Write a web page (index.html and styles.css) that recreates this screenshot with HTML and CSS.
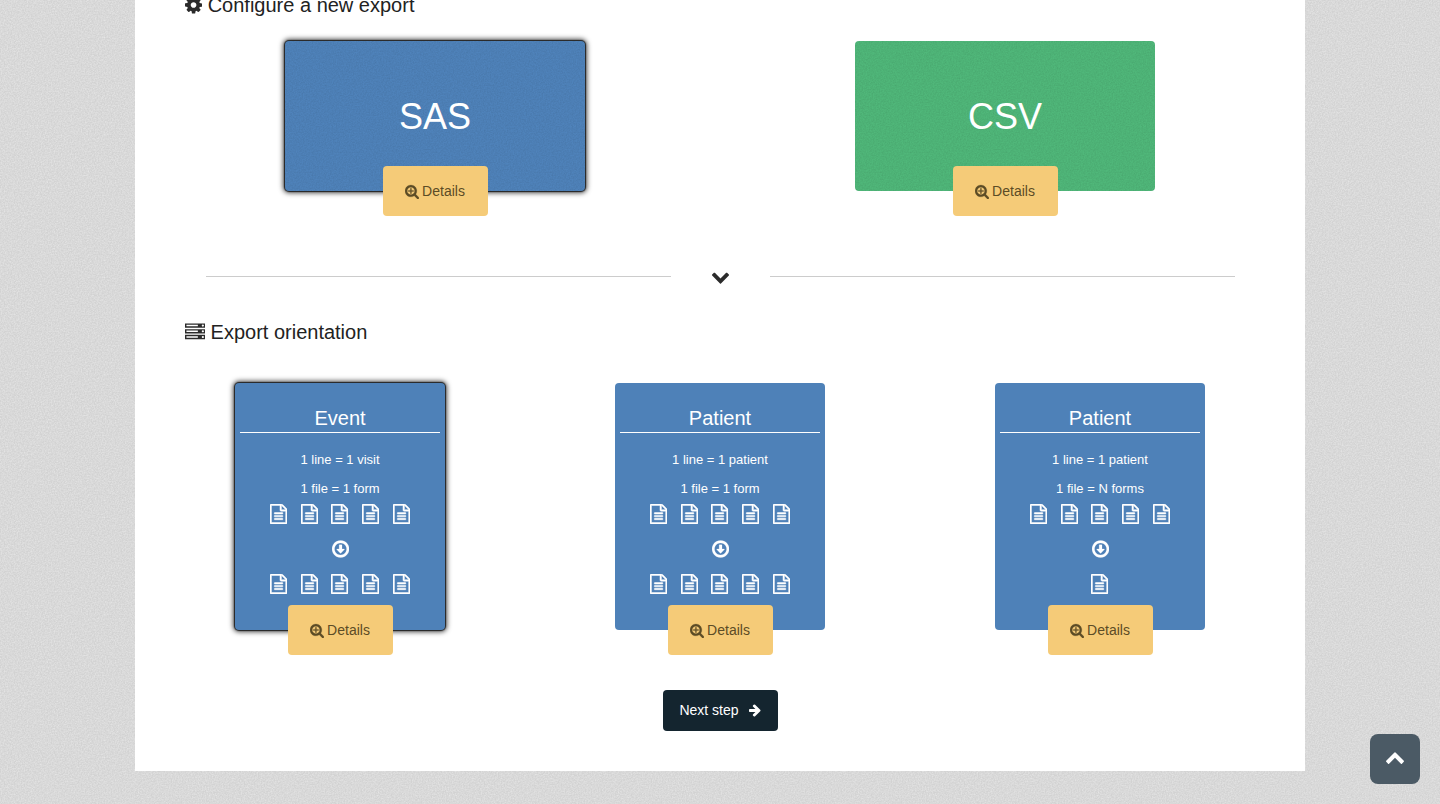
FILE: index.html
```html
<!DOCTYPE html>
<html lang="en">
<head>
<meta charset="utf-8">
<title>Configure a new export</title>
<link rel="stylesheet" href="styles.css">
</head>
<body>
<svg class="defs" aria-hidden="true">
  <symbol id="i-cog" viewBox="128 0 1536 1792"><path d="M1152 896q0-106-75-181t-181-75-181 75-75 181 75 181 181 75 181-75 75-181zm512-109v222q0 12-8 23t-20 13l-185 28q-19 54-39 91 35 50 107 138 10 12 10 25t-9 23q-27 37-99 108t-94 71q-12 0-26-9l-138-108q-44 23-91 38-16 136-29 186-7 28-36 28h-222q-14 0-24.5-8.5t-11.5-21.5l-28-184q-49-16-90-37l-141 107q-10 9-25 9-14 0-25-11-126-114-165-168-7-10-7-23 0-12 8-23 15-21 51-66.5t54-70.5q-27-50-41-99l-183-27q-13-2-21-12.5t-8-23.5v-222q0-12 8-23t19-13l186-28q14-46 39-92-40-57-107-138-10-12-10-24 0-10 9-23 26-36 98.5-107.5t94.5-71.5q13 0 26 10l138 107q44-23 91-38 16-136 29-186 7-28 36-28h222q14 0 24.5 8.5t11.5 21.5l28 184q49 16 90 37l142-107q9-9 24-9 13 0 25 10 129 119 165 170 7 8 7 22 0 12-8 23-15 21-51 66.5t-54 70.5q26 50 41 98l183 28q13 2 21 12.5t8 23.5z"/></symbol>
  <symbol id="i-server" viewBox="0 0 1792 1792"><path d="M128 1408h1024v-128h-1024v128zm0-512h1024v-128h-1024v128zm1568 448q0-40-28-68t-68-28-68 28-28 68 28 68 68 28 68-28 28-68zm-1568-960h1024v-128h-1024v128zm1568 448q0-40-28-68t-68-28-68 28-28 68 28 68 68 28 68-28 28-68zm0-512q0-40-28-68t-68-28-68 28-28 68 28 68 68 28 68-28 28-68zm96 832v384h-1792v-384h1792zm0-512v384h-1792v-384h1792zm0-512v384h-1792v-384h1792z"/></symbol>
  <symbol id="i-search" viewBox="64 0 1664 1792"><path d="M1088 800v64q0 13-9.5 22.5t-22.5 9.5h-224v224q0 13-9.5 22.5t-22.5 9.5h-64q-13 0-22.5-9.5t-9.5-22.5v-224h-224q-13 0-22.5-9.5t-9.5-22.5v-64q0-13 9.5-22.5t22.5-9.5h224v-224q0-13 9.5-22.5t22.5-9.5h64q13 0 22.5 9.5t9.5 22.5v224h224q13 0 22.5 9.5t9.5 22.5zm128 32q0-185-131.5-316.5t-316.5-131.5-316.5 131.5-131.5 316.5 131.5 316.5 316.5 131.5 316.5-131.5 131.5-316.5zm512 832q0 53-37.5 90.5t-90.5 37.5q-54 0-90-38l-343-342q-179 124-399 124-143 0-273.5-55.5t-225-150-150-225-55.5-273.5 55.5-273.5 150-225 225-150 273.5-55.5 273.5 55.5 225 150 150 225 55.5 273.5q0 220-124 399l343 343q37 37 37 90z"/></symbol>
  <symbol id="i-down" viewBox="0 0 1792 1792"><path d="M1683 808l-742 741q-19 19-45 19t-45-19l-742-741q-19-19-19-45.5t19-45.5l166-165q19-19 45-19t45 19l531 531 531-531q19-19 45-19t45 19l166 165q19 19 19 45.5t-19 45.5z"/></symbol>
  <symbol id="i-up" viewBox="0 0 1792 1792"><path d="M1683 1331l-166 165q-19 19-45 19t-45-19l-531-531-531 531q-19 19-45 19t-45-19l-166-165q-19-19-19-45.5t19-45.5l742-741q19-19 45-19t45 19l742 741q19 19 19 45.5t-19 45.5z"/></symbol>
  <symbol id="i-right" viewBox="128 0 1536 1792"><path d="M1600 960q0 54-37 91l-651 651q-39 37-91 37-51 0-90-37l-75-75q-38-38-38-91t38-91l293-293h-704q-52 0-84.5-37.5t-32.5-90.5v-128q0-53 32.5-90.5t84.5-37.5h704l-293-294q-38-36-38-90t38-90l75-75q38-38 90-38 53 0 91 38l651 651q37 35 37 90z"/></symbol>
  <symbol id="i-file" viewBox="128 0 1536 1792"><path d="M1596 380q28 28 48 76t20 88v1152q0 40-28 68t-68 28h-1344q-40 0-68-28t-28-68v-1600q0-40 28-68t68-28h896q40 0 88 20t76 48zm-444-244v376h376q-10-29-22-41l-313-313q-12-12-41-22zm384 1528v-1024h-416q-40 0-68-28t-28-68v-416h-768v1536h1280zm-1024-864q0-14 9-23t23-9h704q14 0 23 9t9 23v64q0 14-9 23t-23 9h-704q-14 0-23-9t-9-23v-64zm736 224q14 0 23 9t9 23v64q0 14-9 23t-23 9h-704q-14 0-23-9t-9-23v-64q0-14 9-23t23-9h704zm0 256q14 0 23 9t9 23v64q0 14-9 23t-23 9h-704q-14 0-23-9t-9-23v-64q0-14 9-23t23-9h704z"/></symbol>
  <symbol id="i-circle" viewBox="0 0 1536 1792"><path d="M1120 928q0 12-10 24l-319 319q-11 9-23 9t-23-9l-320-320q-15-16-7-35 8-20 30-20h192v-352q0-14 9-23t23-9h192q14 0 23 9t9 23v352h192q14 0 23 9t9 23zm-352-576q-148 0-273 73t-198 198-73 273 73 273 198 198 273 73 273-73 198-198 73-273-73-273-198-198-273-73zm768 544q0 209-103 385.5t-279.5 279.5-385.5 103-385.5-103-279.5-279.5-103-385.5 103-385.5 279.5-279.5 385.5-103 385.5 103 279.5 279.5 103 385.5z"/></symbol>
</svg>

<main class="page">
  <h3 class="heading heading-first"><svg class="ico-cog"><use href="#i-cog"/></svg>Configure a new export</h3>

  <section class="formats">
    <div class="choice">
      <div class="format format-blue is-selected">SAS</div>
      <button class="details"><svg class="ico-search"><use href="#i-search"/></svg>Details</button>
    </div>
    <div class="choice">
      <div class="format format-green">CSV</div>
      <button class="details"><svg class="ico-search"><use href="#i-search"/></svg>Details</button>
    </div>
  </section>

  <div class="divider">
    <span class="divider-line"></span>
    <svg class="ico-chevron"><use href="#i-down"/></svg>
    <span class="divider-line"></span>
  </div>

  <h3 class="heading heading-second"><svg class="ico-server"><use href="#i-server"/></svg>Export orientation</h3>

  <section class="orientations">
    <div class="choice">
      <div class="orient is-selected">
        <h4 class="orient-title">Event</h4>
        <p class="orient-line">1 line = 1 visit</p>
        <p class="orient-line">1 file = 1 form</p>
        <div class="files">
          <svg class="ico-file"><use href="#i-file"/></svg><svg class="ico-file"><use href="#i-file"/></svg><svg class="ico-file"><use href="#i-file"/></svg><svg class="ico-file"><use href="#i-file"/></svg><svg class="ico-file"><use href="#i-file"/></svg>
        </div>
        <svg class="ico-circle"><use href="#i-circle"/></svg>
        <div class="files">
          <svg class="ico-file"><use href="#i-file"/></svg><svg class="ico-file"><use href="#i-file"/></svg><svg class="ico-file"><use href="#i-file"/></svg><svg class="ico-file"><use href="#i-file"/></svg><svg class="ico-file"><use href="#i-file"/></svg>
        </div>
      </div>
      <button class="details"><svg class="ico-search"><use href="#i-search"/></svg>Details</button>
    </div>
    <div class="choice">
      <div class="orient">
        <h4 class="orient-title">Patient</h4>
        <p class="orient-line">1 line = 1 patient</p>
        <p class="orient-line">1 file = 1 form</p>
        <div class="files">
          <svg class="ico-file"><use href="#i-file"/></svg><svg class="ico-file"><use href="#i-file"/></svg><svg class="ico-file"><use href="#i-file"/></svg><svg class="ico-file"><use href="#i-file"/></svg><svg class="ico-file"><use href="#i-file"/></svg>
        </div>
        <svg class="ico-circle"><use href="#i-circle"/></svg>
        <div class="files">
          <svg class="ico-file"><use href="#i-file"/></svg><svg class="ico-file"><use href="#i-file"/></svg><svg class="ico-file"><use href="#i-file"/></svg><svg class="ico-file"><use href="#i-file"/></svg><svg class="ico-file"><use href="#i-file"/></svg>
        </div>
      </div>
      <button class="details"><svg class="ico-search"><use href="#i-search"/></svg>Details</button>
    </div>
    <div class="choice">
      <div class="orient">
        <h4 class="orient-title">Patient</h4>
        <p class="orient-line">1 line = 1 patient</p>
        <p class="orient-line">1 file = N forms</p>
        <div class="files">
          <svg class="ico-file"><use href="#i-file"/></svg><svg class="ico-file"><use href="#i-file"/></svg><svg class="ico-file"><use href="#i-file"/></svg><svg class="ico-file"><use href="#i-file"/></svg><svg class="ico-file"><use href="#i-file"/></svg>
        </div>
        <svg class="ico-circle"><use href="#i-circle"/></svg>
        <div class="files">
          <svg class="ico-file"><use href="#i-file"/></svg>
        </div>
      </div>
      <button class="details"><svg class="ico-search"><use href="#i-search"/></svg>Details</button>
    </div>
  </section>

  <div class="actions">
    <button class="next">Next step<svg class="ico-right"><use href="#i-right"/></svg></button>
  </div>
</main>

<a class="to-top" href="#" aria-label="Back to top"><svg class="ico-up"><use href="#i-up"/></svg></a>
</body>
</html>
```

FILE: styles.css
```css
* { box-sizing: border-box; }

html, body { height: 100%; }

html { overflow: hidden; }

body {
  margin: 0;
  font-family: "Liberation Sans", Arial, sans-serif;
  color: #222;
  background-color: #d2d2d2;
  background-image: url("data:image/svg+xml,%3Csvg xmlns='http://www.w3.org/2000/svg' width='240' height='240'%3E%3Cfilter id='n'%3E%3CfeTurbulence type='fractalNoise' baseFrequency='.7' numOctaves='3' stitchTiles='stitch'/%3E%3CfeColorMatrix values='0 0 0 0 1 0 0 0 0 1 0 0 0 0 1 1.1 0 0 0 -.3'/%3E%3C/filter%3E%3Crect width='240' height='240' filter='url(%23n)' opacity='.6'/%3E%3C/svg%3E");
}

.defs { display: none; }

.page {
  width: 1170px;
  height: 777px;
  margin: 0 auto;
  padding: 0 15px;
  background: #fff;
}

.heading {
  margin: 0;
  padding-left: 35px;
  font-size: 20px;
  font-weight: 400;
  line-height: 22px;
  display: flex;
  align-items: center;
}

.heading-first { margin-top: -6px; }
.heading-second { margin-top: 44px; }

.ico-cog { width: 17.14px; height: 20px; margin-right: 5.56px; fill: #2b2b2b; }
.ico-server { width: 20px; height: 20px; margin-right: 5.56px; fill: #2b2b2b; }

.formats {
  display: grid;
  grid-template-columns: repeat(2, 570px);
  margin-top: 25px;
}

.orientations {
  display: grid;
  grid-template-columns: repeat(3, 380px);
  margin-top: 40px;
}

.choice {
  display: flex;
  flex-direction: column;
  align-items: center;
}

.format {
  width: 300px;
  height: 150px;
  padding-top: 1px;
  border-radius: 4px;
  color: #fff;
  font-size: 36px;
  display: flex;
  align-items: center;
  justify-content: center;
  background-image: url("data:image/svg+xml,%3Csvg xmlns='http://www.w3.org/2000/svg' width='240' height='240'%3E%3Cfilter id='n'%3E%3CfeTurbulence type='fractalNoise' baseFrequency='.7' numOctaves='3' stitchTiles='stitch'/%3E%3CfeColorMatrix values='0 0 0 0 0 0 0 0 0 0 0 0 0 0 0 1.1 0 0 0 -.3'/%3E%3C/filter%3E%3Crect width='240' height='240' filter='url(%23n)' opacity='.12'/%3E%3C/svg%3E");
}

.format-blue { background-color: #4f83bb; }
.format-green { background-color: #50b87a; }

.is-selected {
  box-shadow: 0 0 1px 1px rgba(30, 30, 30, .95), 0 0 5px 2px rgba(0, 0, 0, .7);
}

.details {
  width: 105px;
  height: 50px;
  margin-top: -25px;
  border: 0;
  border-radius: 4px;
  background: #f5cb78;
  color: #5c4c26;
  font: 14px "Liberation Sans", Arial, sans-serif;
  display: flex;
  align-items: center;
  justify-content: center;
}

.ico-search {
  width: 14px;
  height: 15px;
  margin-right: 3px;
  fill: #5c4c26;
  stroke: #5c4c26;
  stroke-width: 30;
}

.divider {
  display: flex;
  align-items: center;
  justify-content: space-between;
  width: 1029px;
  height: 1px;
  margin: 60px 0 0 56px;
}

.divider-line { width: 465px; height: 1px; background: #ccc; }

.ico-chevron { width: 19px; height: 19px; flex: none; fill: #2b2b2b; }

.orient {
  width: 210px;
  height: 247px;
  padding: 24px 5px 0;
  border-radius: 4px;
  background: #4e81b8;
  color: #fff;
  display: flex;
  flex-direction: column;
  align-items: center;
}

.orient-title {
  width: 100%;
  margin: 0;
  padding-bottom: 3px;
  border-bottom: 1px solid #fff;
  font-size: 20px;
  font-weight: 400;
  line-height: 22px;
  text-align: center;
}

.orient-line {
  margin: 0;
  font-size: 13px;
  line-height: 29px;
  text-align: center;
}

.orient-title + .orient-line { margin-top: 12px; }

.files {
  display: flex;
  justify-content: center;
  gap: 13.5px;
  height: 20px;
  flex: none;
}

.orient-line + .files { margin-top: 1px; }

.ico-file {
  width: 17.14px;
  height: 20px;
  fill: #fff;
  stroke: #fff;
  stroke-width: 45;
}

.ico-circle {
  width: 17.14px;
  height: 20px;
  margin: 15px 0 15px 1px;
  flex: none;
  fill: #fff;
  stroke: #fff;
  stroke-width: 20;
}

.actions {
  display: flex;
  justify-content: center;
  margin-top: 35px;
}

.next {
  width: 115px;
  height: 41px;
  padding: 0 0 1px;
  border: 0;
  border-radius: 4px;
  background: #14252f;
  color: #fff;
  font: 14px "Liberation Sans", Arial, sans-serif;
  display: flex;
  align-items: center;
  justify-content: center;
}

.ico-right { width: 12px; height: 14px; margin-left: 10px; fill: #fff; }

.to-top {
  position: fixed;
  right: 20px;
  bottom: 20px;
  width: 50px;
  height: 50px;
  border-radius: 8px;
  background: #4b5a65;
  display: flex;
  align-items: center;
  justify-content: center;
}

.ico-up { width: 20px; height: 20px; margin-top: -4px; fill: #fff; }
```
